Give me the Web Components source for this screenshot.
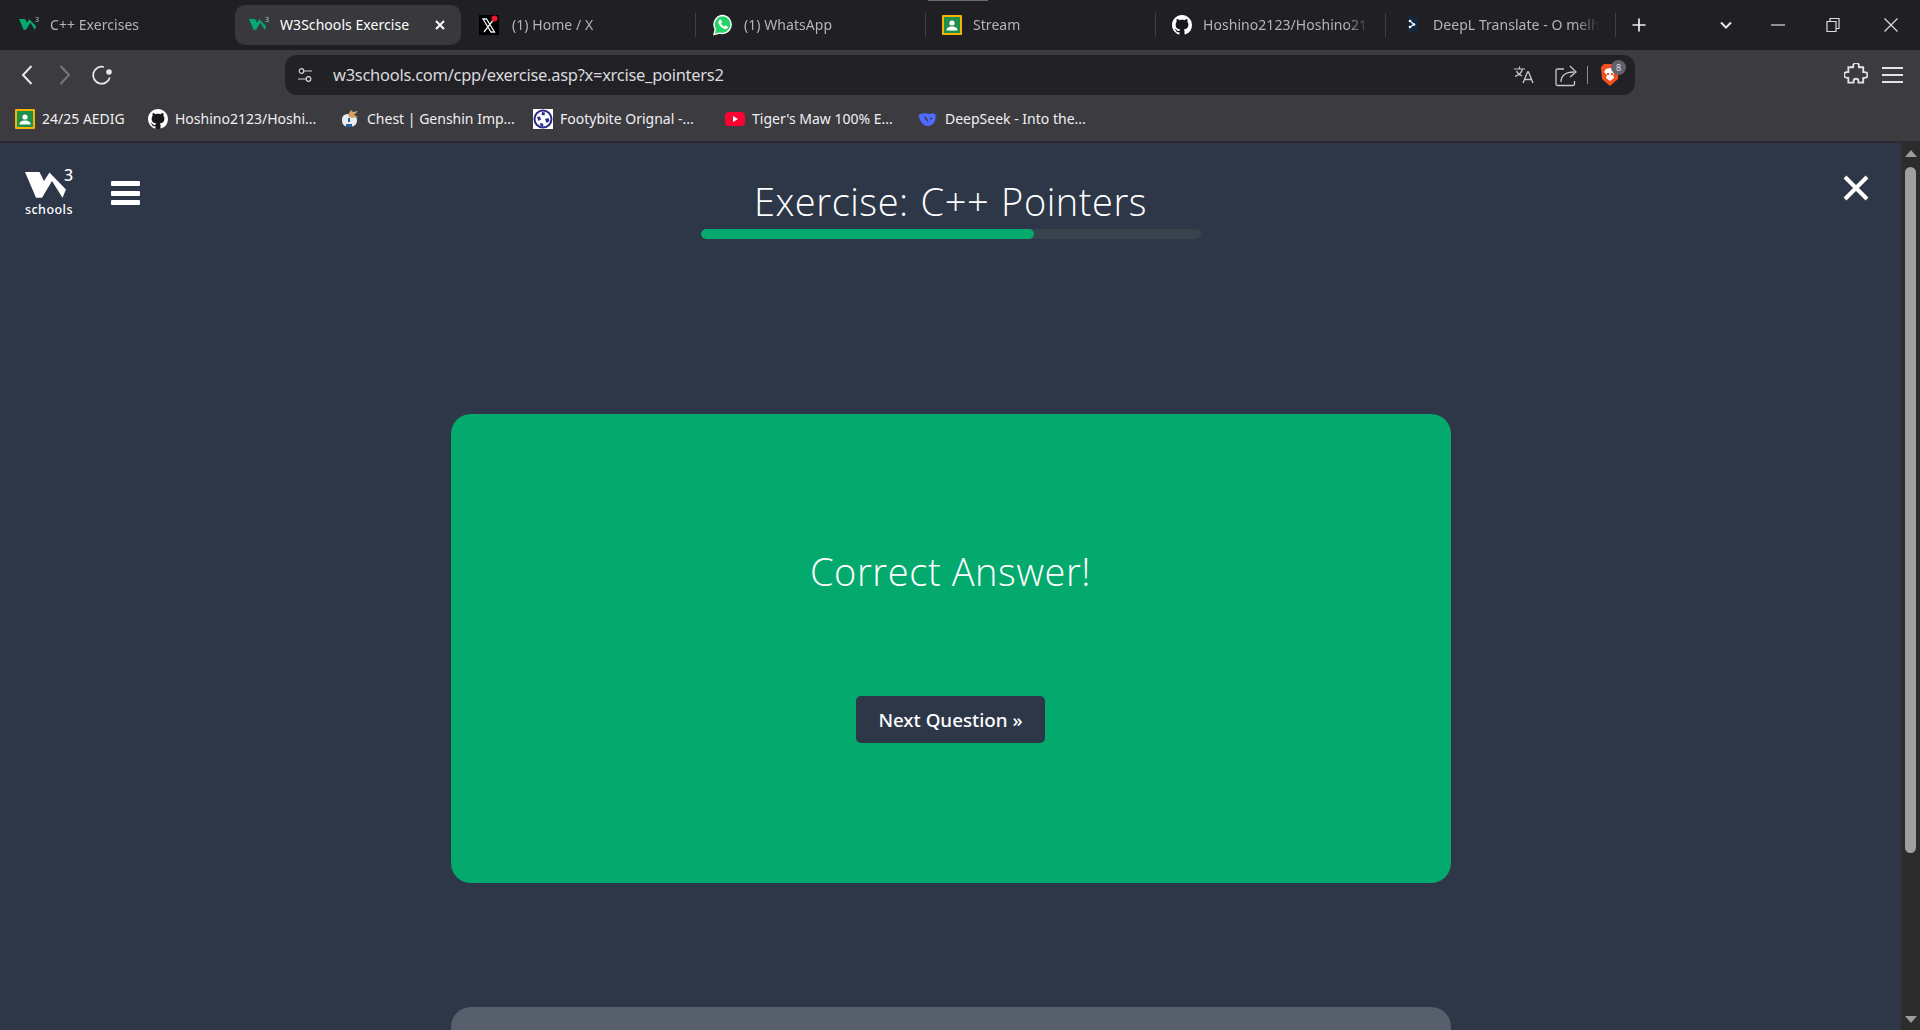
<!DOCTYPE html>
<html>
<head>
<meta charset="utf-8">
<title>W3Schools Exercise</title>
<style>
  html, body { margin: 0; height: 100%; overflow: hidden; background: #2d3748; }
  body { font-family: "Noto Sans", sans-serif; }
  svg { display: block; }
</style>
</head>
<body>
<browser-window>
  <tab-strip slot="chrome">
    <chrome-tab>
      <svg slot="icon" width="20" height="20" viewBox="0 0 20 20"><path transform="translate(0 4) scale(.42)" fill="#04aa6d" d="M0 0H14.500L19 9 24.500.500 41 17.500 37.500 25.700 27 9 17 25.700H11z"/><text x="16" y="7" font-size="7" fill="#9fd8c0" font-family="Noto Sans">3</text></svg>
      C++ Exercises
    </chrome-tab>
    <chrome-tab active>
      <svg slot="icon" width="20" height="20" viewBox="0 0 20 20"><path transform="translate(0 4) scale(.42)" fill="#04aa6d" d="M0 0H14.500L19 9 24.500.500 41 17.500 37.500 25.700 27 9 17 25.700H11z"/><text x="16" y="7" font-size="7" fill="#9fd8c0" font-family="Noto Sans">3</text></svg>
      W3Schools Exercise
    </chrome-tab>
    <chrome-tab style="--label-gap: 13px">
      <svg slot="icon" width="20" height="20" viewBox="0 0 20 20"><rect width="20" height="20" fill="#000"/><path fill="none" stroke="#eee" stroke-width="1.300" d="M4 4l8 13h3.500L7.500 4zM15 4L5 17"/><circle cx="15.500" cy="3.500" r="3" fill="#f0182c"/></svg>
      (1) Home / X
    </chrome-tab>
    <chrome-tab separated style="--tab-pad: 18px">
      <svg slot="icon" width="20" height="24" viewBox="0 0 20 24"><path fill="#25d366" stroke="#fff" stroke-width="1.400" d="M10 2.500a9 9 0 0 0-7.700 13.600L1 21.500l5.600-1.400A9 9 0 1 0 10 2.500z"/><path fill="#fff" d="M6.700 6.800c.5-.5 1.200-.4 1.500.2l.8 1.800c.1.400 0 .7-.3 1l-.6.7c.6 1.300 1.700 2.400 3 3l.8-.8c.3-.3.600-.3 1-.2l1.700.9c.5.300.6 1 .2 1.500-.9 1-2.300 1.300-3.600.8-2.700-1-4.900-3.200-5.700-5.800-.3-1.100 0-2.200 1.200-3.100z"/></svg>
      (1) WhatsApp
    </chrome-tab>
    <chrome-tab separated loading>
      <svg slot="icon" width="20" height="20" viewBox="0 0 20 20"><rect width="20" height="20" rx="1" fill="#f4b400"/><rect x="2" y="2" width="16" height="16" fill="#1f8f4e"/><circle cx="10" cy="8" r="2.600" fill="#fff"/><path fill="#fff" d="M4.500 15.500c0-3 2.500-4 5.500-4s5.500 1 5.500 4z"/></svg>
      Stream
    </chrome-tab>
    <chrome-tab separated>
      <svg slot="icon" width="20" height="20" viewBox="0 0 16 16"><circle cx="8" cy="8" r="8" fill="#16181c"/><path fill="#fff" d="M8 0C3.580 0 0 3.580 0 8c0 3.540 2.290 6.530 5.470 7.590.4.070.55-.17.55-.38 0-.19-.01-.82-.01-1.490-2.010.37-2.530-.49-2.690-.94-.09-.23-.48-.94-.82-1.130-.28-.15-.68-.52-.01-.53.63-.01 1.080.58 1.230.82.72 1.210 1.870.87 2.330.66.07-.52.28-.87.51-1.070-1.780-.2-3.640-.89-3.640-3.950 0-.87.31-1.590.82-2.150-.08-.2-.36-1.020.08-2.120 0 0 .67-.21 2.200.82.64-.18 1.320-.27 2-.27.68 0 1.360.09 2 .27 1.530-1.040 2.200-.82 2.200-.82.44 1.100.16 1.920.08 2.120.51.56.82 1.270.82 2.150 0 3.070-1.870 3.750-3.650 3.950.29.25.54.73.54 1.480 0 1.070-.01 1.930-.01 2.200 0 .21.15.46.55.38A8.013 8.013 0 0 0 16 8c0-4.420-3.580-8-8-8z"/></svg>
      Hoshino2123/Hoshino2123
    </chrome-tab>
    <chrome-tab separated>
      <svg slot="icon" width="20" height="22" viewBox="0 0 20 22"><path fill="#0f2b46" d="M7 1l8.500 4.500v9.500L9.500 18.500 9 21l-2-2.500z"/><path fill="none" stroke="#fff" stroke-width="1.100" d="M8 7l4 3.500-4 2.500"/><circle cx="8" cy="7" r="1.300" fill="#fff"/><circle cx="12" cy="10.500" r="1.300" fill="#fff"/><circle cx="8" cy="13" r="1.300" fill="#fff"/></svg>
      DeepL Translate - O melhor tradutor
    </chrome-tab>
    <window-controls></window-controls>
  </tab-strip>

  <nav-toolbar slot="chrome"></nav-toolbar>

  <bookmarks-bar slot="chrome">
    <bookmark-link>
      <svg slot="icon" width="20" height="20" viewBox="0 0 20 20"><rect width="20" height="20" rx="1" fill="#f4b400"/><rect x="2" y="2" width="16" height="16" fill="#1f8f4e"/><circle cx="10" cy="8" r="2.600" fill="#fff"/><path fill="#fff" d="M4.500 15.500c0-3 2.500-4 5.500-4s5.500 1 5.500 4z"/></svg>
      24/25 AEDIG
    </bookmark-link>
    <bookmark-link>
      <svg slot="icon" width="20" height="20" viewBox="0 0 16 16"><circle cx="8" cy="8" r="8" fill="#16181c"/><path fill="#fff" d="M8 0C3.580 0 0 3.580 0 8c0 3.540 2.290 6.530 5.470 7.590.4.070.55-.17.55-.38 0-.19-.01-.82-.01-1.490-2.010.37-2.530-.49-2.690-.94-.09-.23-.48-.94-.82-1.130-.28-.15-.68-.52-.01-.53.63-.01 1.080.58 1.230.82.72 1.210 1.870.87 2.330.66.07-.52.28-.87.51-1.070-1.780-.2-3.640-.89-3.640-3.950 0-.87.31-1.590.82-2.150-.08-.2-.36-1.020.08-2.120 0 0 .67-.21 2.200.82.64-.18 1.320-.27 2-.27.68 0 1.360.09 2 .27 1.530-1.040 2.200-.82 2.200-.82.44 1.100.16 1.920.08 2.120.51.56.82 1.270.82 2.150 0 3.070-1.870 3.750-3.650 3.950.29.25.54.73.54 1.480 0 1.070-.01 1.930-.01 2.200 0 .21.15.46.55.38A8.013 8.013 0 0 0 16 8c0-4.420-3.580-8-8-8z"/></svg>
      Hoshino2123/Hoshi...
    </bookmark-link>
    <bookmark-link>
      <svg slot="icon" width="20" height="20" viewBox="0 0 20 20"><path fill="#e8edf2" d="M9 5c5 0 8 2.500 8 6.500S14 18 9 18 2 15 2 11s2-6 7-6z"/><path fill="#d9a066" d="M8 6l3-5 2 2 5-1-4 4 4 2-6 1-3-1z"/><path fill="#2a5d9c" d="M6 15h6v3H6zM8 9h2v4H8z"/></svg>
      Chest | Genshin Imp...
    </bookmark-link>
    <bookmark-link>
      <svg slot="icon" width="20" height="20" viewBox="0 0 20 20"><rect width="20" height="20" fill="#fff"/><circle cx="10" cy="10" r="8.500" fill="#fff" stroke="#2b2b8c" stroke-width="2"/><path fill="#2b2b8c" d="M9 3l3 .5-.5 3-3-.5zM4 8l3-.5 1 3-2.500 1.500zM12 10l3.500-1 1 3-3 2zM7 14l3 .5.5 3-3-.5z"/></svg>
      Footybite Orignal -...
    </bookmark-link>
    <bookmark-link>
      <svg slot="icon" width="20" height="20" viewBox="0 0 20 20"><rect y="3" width="20" height="14" rx="4" fill="#ff0033"/><path fill="#fff" d="M8 7l5 3-5 3z"/></svg>
      Tiger's Maw 100% E...
    </bookmark-link>
    <bookmark-link>
      <svg slot="icon" width="20" height="20" viewBox="0 0 20 20"><path fill="#4d6bfe" d="M19.500 4.500c-.8.400-1.200.800-1.600 1.400-1.500-1.200-3.700-1.600-6-1C6.500 3.500 2 4.500.5 6c1 5.500 4 11 9 11 3.500 0 6-2 7-4.500 1-1.800 1.200-4 .9-5.600.6-.5 1.400-1.300 2.100-2.400z"/><path fill="#3b3b40" d="M6 7c2 1 4 3 4.500 6-2-1-4-3-4.500-6zM13 8.500a1 1 0 1 0 .1 0z"/></svg>
      DeepSeek - Into the...
    </bookmark-link>
  </bookmarks-bar>

  <exercise-page>
    <site-header heading="Exercise: C++ Pointers" progress="66.6"></site-header>
    <result-card>
      Correct Answer!
      <action-button slot="action">Next Question »</action-button>
    </result-card>
    <teaser-card>Log in to track</teaser-card>
  </exercise-page>
</browser-window>

<script>
class BrowserWindow extends HTMLElement {
  constructor () {
    super()
    this.attachShadow({ mode: 'open' }).innerHTML = /* html */`
      <style>
        :host { display: flex; flex-direction: column; height: 100vh; overflow: hidden; }
        .content { flex: 1; min-height: 0; display: flex; }
        .scrollbar {
          width: 19px; flex: none; background: #2c2c2c;
          display: flex; flex-direction: column; align-items: center;
        }
        .arrow { width: 0; height: 0; border-left: 6px solid transparent; border-right: 6px solid transparent; }
        .up { border-bottom: 7px solid #9b9b9b; margin-top: 7px; }
        .down { border-top: 7px solid #9b9b9b; margin-bottom: 7px; }
        .track { flex: 1; width: 100%; display: flex; justify-content: center; padding-top: 10px; }
        .thumb { width: 11px; height: 686px; border-radius: 6px; background: #9f9f9f; }
      </style>
      <slot name="chrome"></slot>
      <div class="content">
        <slot></slot>
        <div class="scrollbar">
          <div class="arrow up"></div>
          <div class="track"><div class="thumb"></div></div>
          <div class="arrow down"></div>
        </div>
      </div>
    `
  }
}

class TabStrip extends HTMLElement {
  constructor () {
    super()
    this.attachShadow({ mode: 'open' }).innerHTML = /* html */`
      <style>
        :host { display: flex; height: 50px; flex: none; padding: 5px 0 5px 5px; box-sizing: border-box; background: #1f1f24; }
      </style>
      <slot></slot>
    `
  }
}

class ChromeTab extends HTMLElement {
  constructor () {
    super()
    this.attachShadow({ mode: 'open' }).innerHTML = /* html */`
      <style>
        :host {
          display: flex; align-items: center; position: relative;
          width: 230px; flex: none; box-sizing: border-box; padding: 0 15px 0 var(--tab-pad, 14px);
          gap: var(--label-gap, 11px); font: 14px "Noto Sans", sans-serif; color: #b4b4b8; white-space: nowrap;
        }
        :host([separated]) { padding-left: var(--tab-pad, 17px); gap: var(--label-gap, 11px); }
        :host([active]) { width: 226px; margin-right: 4px; background: #38383d; border-radius: 10px; color: #fff; }
        :host([separated])::before {
          content: ""; position: absolute; left: 0; top: 8px; bottom: 8px; width: 1px; background: #3f3f45;
        }
        :host([loading])::after {
          content: ""; position: absolute; left: 3px; top: -5px; width: 60px; height: 1px; background: #6a6a70;
        }
        .title {
          flex: 1; overflow: hidden; letter-spacing: .05px; padding-bottom: 2px;
          -webkit-mask-image: linear-gradient(to right, #000 calc(100% - 24px), transparent);
        }
        :host([active]) .title { -webkit-mask-image: none; }
        .close { display: none; font-size: 0; }
        :host([active]) .close { display: block; }
        ::slotted(svg) { flex: none; }
      </style>
      <slot name="icon"></slot>
      <span class="title"><slot></slot></span>
      <svg class="close" width="12" height="12" viewBox="0 0 12 12"><path d="M2 2l8 8M10 2l-8 8" stroke="#fff" stroke-width="2"/></svg>
    `
  }
}

class WindowControls extends HTMLElement {
  constructor () {
    super()
    this.attachShadow({ mode: 'open' }).innerHTML = /* html */`
      <style>
        :host { flex: 1; display: flex; align-items: center; position: relative; border-left: 1px solid #3f3f45; margin: 8px 0; }
        .row { display: flex; align-items: center; width: 100%; }
        .row svg { display: block; flex: none; }
        .plus { margin-left: 15px; }
        .chev { margin-left: 72px; }
        .min { margin-left: 38px; }
        .max { margin-left: 41px; }
        .x { margin-left: 44px; }
      </style>
      <div class="row">
        <svg class="plus" width="16" height="16" viewBox="0 0 16 16"><path d="M8 1.500v13M1.500 8h13" stroke="#eee" stroke-width="1.700"/></svg>
        <svg class="chev" width="14" height="14" viewBox="0 0 14 14"><path d="M2 4.500l5 5 5-5" fill="none" stroke="#e8e8e8" stroke-width="2"/></svg>
        <svg class="min" width="14" height="14" viewBox="0 0 14 14"><path d="M0 7h14" stroke="#ddd" stroke-width="1.200"/></svg>
        <svg class="max" width="14" height="16" viewBox="0 0 14 16"><path d="M1 4.500h9v10H1zM4 4.500v-3h9v10h-3" fill="none" stroke="#ddd" stroke-width="1.200"/></svg>
        <svg class="x" width="14" height="14" viewBox="0 0 14 14"><path d="M.5.500l13 13M13.500.500l-13 13" stroke="#ddd" stroke-width="1.200"/></svg>
      </div>
    `
  }
}

class NavToolbar extends HTMLElement {
  constructor () {
    super()
    this.attachShadow({ mode: 'open' }).innerHTML = /* html */`
      <style>
        :host { display: flex; align-items: center; flex: none; height: 47px; box-sizing: border-box; padding: 5px 0 2px 0; background: #3b3b40; }
        svg { display: block; flex: none; }
        .back { margin-left: 20px; }
        .fwd { margin-left: 24px; }
        .reload { margin-left: 19px; }
        .omnibox {
          flex: none; width: 1350px; height: 40px; margin-left: 172px; box-sizing: border-box;
          background: #212126; border-radius: 12px; display: flex; align-items: center; padding-left: 12px;
          color: #d9d9dc; font: 16.500px "Noto Sans", sans-serif;
        }
        .url { margin-left: 20px; padding-bottom: 2px; flex: 1; letter-spacing: -.28px; white-space: nowrap; }
        .translate { margin-right: 20px; }
        .share { margin-right: 10px; }
        .divider { width: 1px; height: 18px; background: #8c8c90; margin-right: 12px; }
        .shield-wrap { position: relative; width: 35px; height: 32px; display: flex; align-items: center; }
        .badge {
          position: absolute; left: 11px; top: 1px; width: 15px; height: 15px; border-radius: 50%;
          background: #62626d; color: #ddd; font-size: 9px; line-height: 15px; text-align: center;
        }
        .ext { margin-left: 209px; }
        .menu { margin-left: 14px; }
      </style>
      <svg class="back" width="14" height="22" viewBox="0 0 14 22"><path d="M11.500 2L3 11l8.500 9" fill="none" stroke="#e8e8e8" stroke-width="2"/></svg>
      <svg class="fwd" width="14" height="22" viewBox="0 0 14 22"><path d="M2.500 2L11 11l-8.500 9" fill="none" stroke="#77777b" stroke-width="2"/></svg>
      <svg class="reload" width="22" height="22" viewBox="0 0 22 22"><path d="M18.800 13.500A8.500 8.500 0 1 1 13 3" fill="none" stroke="#e8e8e8" stroke-width="1.800"/><circle cx="18" cy="8" r="2.800" fill="#e8e8e8"/></svg>
      <div class="omnibox">
        <svg width="16" height="16" viewBox="0 0 16 16"><circle cx="4.500" cy="4" r="2.300" fill="none" stroke="#d5d5d8" stroke-width="1.200"/><path d="M7 4h8M1 12h8" stroke="#d5d5d8" stroke-width="1.200"/><circle cx="11.500" cy="12" r="2.300" fill="none" stroke="#d5d5d8" stroke-width="1.200"/></svg>
        <span class="url">w3schools.com/cpp/exercise.asp?x=xrcise_pointers2</span>
        <svg class="translate" width="22" height="22" viewBox="0 0 22 22"><path d="M1 5h11M6.500 2.500V5M9.500 5c-.8 3.500-3.500 6-7.500 7.500M3.500 7c1 2.500 3 4 5.500 5" fill="none" stroke="#c9c9cc" stroke-width="1.200"/><path d="M10 19l4.500-11h1L20 19M11.500 15.500h7" fill="none" stroke="#c9c9cc" stroke-width="1.300"/></svg>
        <svg class="share" width="22" height="24" viewBox="0 0 22 24"><path d="M9 6H2.500A1.500 1.500 0 0 0 1 7.500V21a1.500 1.500 0 0 0 1.500 1.500H18a1.500 1.500 0 0 0 1.500-1.500v-3" fill="none" stroke="#c9c9cc" stroke-width="1.300"/><path d="M6 19c0-6 4-10 13-10M15 3l6 6-6 5" fill="none" stroke="#c9c9cc" stroke-width="1.300"/></svg>
        <div class="divider"></div>
        <div class="shield-wrap">
          <svg width="20" height="24" viewBox="0 0 20 24"><path fill="#f4501e" d="M4 1h12l3 3-1 12-8 7-8-7L1 4z"/><path fill="#fff" d="M6 6l4-1 4 1 2 3-3 3 1 3-4 3-4-3 1-3-3-3z"/><path fill="#f4501e" d="M7 10h2v2H7zM11 10h2v2h-2z"/></svg>
          <span class="badge">8</span>
        </div>
      </div>
      <svg class="ext" width="24" height="24" viewBox="0 0 24 24"><path d="M9 4.500a3 3 0 0 1 6 0V6h4.500v5H21a3 3 0 0 1 0 6h-1.500v5h-5v-1.500a2.500 2.500 0 0 0-5 0V22H4v-5H2.500a3 3 0 0 1 0-6H4V6h5z" transform="translate(.5 -1.500) scale(.96)" fill="none" stroke="#e4e4e6" stroke-width="1.900"/></svg>
      <svg class="menu" width="22" height="20" viewBox="0 0 22 20"><path d="M0 3h21M0 10h21M0 17h21" stroke="#e4e4e6" stroke-width="1.800"/></svg>
    `
  }
}

class BookmarksBar extends HTMLElement {
  constructor () {
    super()
    this.attachShadow({ mode: 'open' }).innerHTML = /* html */`
      <style>
        :host {
          display: grid; grid-template-columns: 133px 192px 193px 192px 193px auto; align-items: center; flex: none;
          height: 46px; box-sizing: border-box; padding: 0 0 0 15px;
          background: #3b3b40; border-bottom: 2px solid #2b2b30;
        }
      </style>
      <slot></slot>
    `
  }
}

class BookmarkLink extends HTMLElement {
  constructor () {
    super()
    this.attachShadow({ mode: 'open' }).innerHTML = /* html */`
      <style>
        :host { display: flex; align-items: center; gap: 7px; color: #f0f0f2; font: 14px "Noto Sans", sans-serif; white-space: nowrap; }
        span { padding-bottom: 2px; }
        ::slotted(svg) { flex: none; }
      </style>
      <slot name="icon"></slot>
      <span><slot></slot></span>
    `
  }
}

class ExercisePage extends HTMLElement {
  constructor () {
    super()
    this.attachShadow({ mode: 'open' }).innerHTML = /* html */`
      <style>
        :host {
          flex: 1; min-width: 0; display: flex; flex-direction: column; align-items: center;
          background: #2d3748; overflow: hidden;
        }
      </style>
      <slot></slot>
    `
  }
}

class SiteHeader extends HTMLElement {
  constructor () {
    super()
    this.attachShadow({ mode: 'open' })
  }

  connectedCallback () {
    const heading = this.getAttribute('heading')
    const progress = this.getAttribute('progress')
    this.shadowRoot.innerHTML = /* html */`
      <style>
        :host {
          display: grid; grid-template-columns: 1fr auto 1fr; align-items: start; flex: none;
          width: 100%; height: 271px; box-sizing: border-box; color: #fff;
        }
        .left { display: flex; align-items: flex-start; padding: 25px 0 0 25px; gap: 38px; }
        .logo { position: relative; width: 48px; height: 48px; font: 500 12.500px "Noto Sans", sans-serif; }
        .logo svg { display: block; }
        .three { position: absolute; left: 39px; top: -4px; font-size: 16px; font-weight: 500; }
        .schools { position: absolute; left: 0; top: 33px; letter-spacing: .45px; }
        .burger { display: flex; flex-direction: column; gap: 4.500px; padding-top: 13px; }
        .burger i { display: block; width: 29px; height: 5px; background: #fff; border-radius: 1px; }
        .center { display: flex; flex-direction: column; align-items: center; }
        h1 { margin: 30px 0 0; font: 300 38px/56px "Open Sans", sans-serif; letter-spacing: .55px; word-spacing: 1.500px; }
        .track { width: 500px; height: 10px; border-radius: 5px; background: #38444d; overflow: hidden; }
        .fill { height: 100%; border-radius: 5px; background: #04aa6d; }
        .right { display: flex; justify-content: flex-end; padding: 32px 32px 0 0; }
      </style>
      <div class="left">
        <div class="logo">
          <svg width="41" height="26" viewBox="0 0 41 26" style="margin-top:4px"><path fill="#fff" d="M0 0H14.500L19 9 24.500.500 41 17.500 37.500 25.700 27 9 17 25.700H11z"/></svg>
          <span class="three">3</span>
          <span class="schools">schools</span>
        </div>
        <div class="burger"><i></i><i></i><i></i></div>
      </div>
      <div class="center">
        <h1>${heading}</h1>
        <div class="track"><div class="fill" style="width:${progress}%"></div></div>
      </div>
      <div class="right">
        <svg width="26" height="26" viewBox="0 0 26 26"><path d="M2 2l22 22M24 2L2 24" stroke="#fff" stroke-width="4"/></svg>
      </div>
    `
  }
}

class ResultCard extends HTMLElement {
  constructor () {
    super()
    this.attachShadow({ mode: 'open' }).innerHTML = /* html */`
      <style>
        :host {
          display: flex; flex-direction: column; align-items: center; flex: none;
          width: 1000px; height: 469px; box-sizing: border-box; padding-top: 129px;
          background: #04aa6d; border-radius: 20px; color: #fff;
        }
        .msg { font: 300 38px/56px "Open Sans", sans-serif; letter-spacing: .6px; }
        .action { margin-top: 97px; }
      </style>
      <div class="msg"><slot></slot></div>
      <div class="action"><slot name="action"></slot></div>
    `
  }
}

class ActionButton extends HTMLElement {
  constructor () {
    super()
    this.attachShadow({ mode: 'open' }).innerHTML = /* html */`
      <style>
        :host {
          display: flex; align-items: center; justify-content: center;
          width: 189px; height: 47px; border-radius: 5px; background: #2d3748;
          color: #fff; font: 500 18.800px "Noto Sans", sans-serif;
        }
      </style>
      <slot></slot>
    `
  }
}

class TeaserCard extends HTMLElement {
  constructor () {
    super()
    this.attachShadow({ mode: 'open' }).innerHTML = /* html */`
      <style>
        :host {
          display: block; flex: none; box-sizing: border-box; width: 1000px; height: 200px; margin-top: 124px;
          padding-top: 16px; background: #575f6d; border-radius: 20px; color: #fff; text-align: center;
          font: 300 24px/32px "Open Sans", sans-serif;
        }
      </style>
      <slot></slot>
    `
  }
}

customElements.define('browser-window', BrowserWindow)
customElements.define('tab-strip', TabStrip)
customElements.define('chrome-tab', ChromeTab)
customElements.define('window-controls', WindowControls)
customElements.define('nav-toolbar', NavToolbar)
customElements.define('bookmarks-bar', BookmarksBar)
customElements.define('bookmark-link', BookmarkLink)
customElements.define('exercise-page', ExercisePage)
customElements.define('site-header', SiteHeader)
customElements.define('result-card', ResultCard)
customElements.define('action-button', ActionButton)
customElements.define('teaser-card', TeaserCard)
</script>
</body>
</html>
